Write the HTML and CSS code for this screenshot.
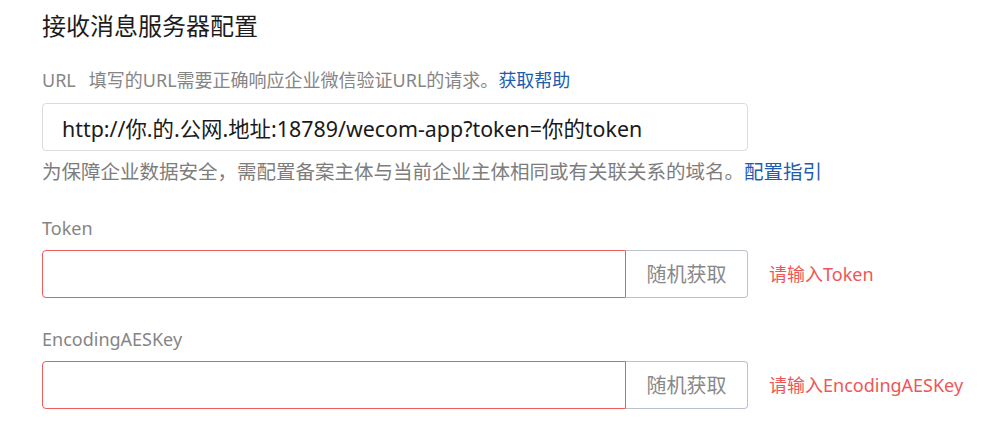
FILE: index.html
```html
<!DOCTYPE html>
<html lang="zh-CN">
<head>
<meta charset="utf-8">
<title>接收消息服务器配置</title>
<link rel="stylesheet" href="styles.css">
</head>
<body>
<div class="page">
  <h1 class="title">接收消息服务器配置</h1>

  <div class="label label-url"><span class="url-key">URL</span><span>填写的URL需要正确响应企业微信验证URL的请求。</span><a class="link" href="#">获取帮助</a></div>
  <div class="input-box url-box"><span class="input-text">http://你.的.公网.地址:18789/wecom-app?token=你的token</span></div>
  <div class="hint">为保障企业数据安全，需配置备案主体与当前企业主体相同或有关联关系的域名。<a class="link" href="#">配置指引</a></div>

  <div class="label label-field">Token</div>
  <div class="row">
    <div class="group">
      <div class="input-box error-box"></div>
      <div class="btn">随机获取</div>
    </div>
    <div class="error">请输入Token</div>
  </div>

  <div class="label label-field label-aes">EncodingAESKey</div>
  <div class="row">
    <div class="group">
      <div class="input-box error-box"></div>
      <div class="btn">随机获取</div>
    </div>
    <div class="error">请输入EncodingAESKey</div>
  </div>
</div>
</body>
</html>
```

FILE: styles.css
```css
* { box-sizing: border-box; }
html, body { margin: 0; padding: 0; background: #ffffff; }
body {
  font-family: "Noto Sans", "Noto Sans CJK SC", sans-serif;
  color: #1f1f1f;
}
.page {
  display: flex;
  flex-direction: column;
  padding: 10px 0 0 42px;
  width: 1007px;
}
.title {
  margin: 0;
  font-size: 24px;
  font-weight: 400;
  line-height: 32px;
  color: #1c1c1c;
}
.label {
  font-size: 18px;
  line-height: 24px;
  color: #858585;
  display: flex;
  align-items: center;
}
.label-url { margin-top: 26px; }
.url-key { margin-right: 13px; }
.link { color: #1d5cae; text-decoration: none; }
.input-box {
  height: 48px;
  border: 1px solid #dcdcdc;
  border-radius: 4px;
  display: flex;
  align-items: center;
}
.url-box {
  width: 706px;
  margin-top: 11px;
  padding-left: 19px;
}
.input-text {
  font-size: 21.4px;
  color: #1a1a1a;
  white-space: nowrap;
}
.hint {
  margin-top: 9px;
  font-size: 19.5px;
  line-height: 24px;
  color: #7d7d7d;
  white-space: nowrap;
}
.label-field { margin-top: 32px; }
.label-aes { margin-top: 29px; }
.row {
  display: flex;
  align-items: center;
  margin-top: 10px;
}
.group {
  display: flex;
  width: 706px;
}
.error-box {
  flex: 1;
  border-color: #ee5b5b;
  border-radius: 4px 0 0 4px;
}
.btn {
  width: 122px;
  height: 48px;
  border: 1px solid #bcc2cb;
  border-left: none;
  border-radius: 0 4px 4px 0;
  display: flex;
  align-items: center;
  justify-content: center;
  font-size: 20px;
  color: #888888;
  padding-bottom: 2px;
}
.error {
  margin-left: 21px;
  font-size: 18px;
  color: #ef5656;
  padding-bottom: 3px;
}
```
